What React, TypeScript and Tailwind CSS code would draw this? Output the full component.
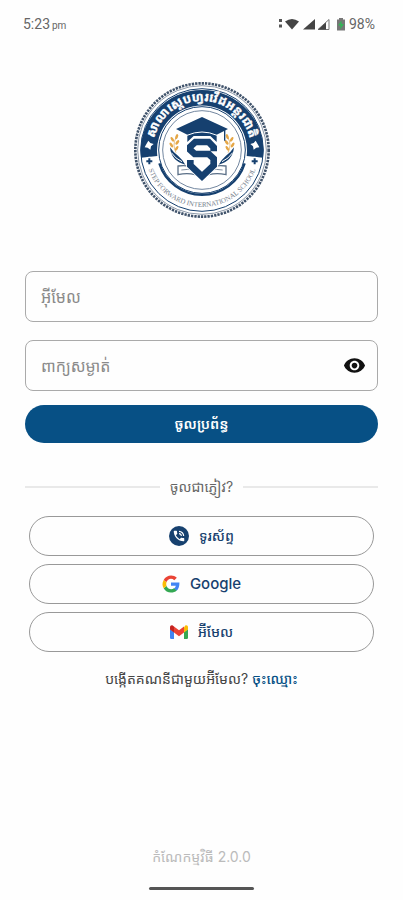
import { useState, type ReactNode } from "react";
import { MdPhoneInTalk, MdVisibility, MdVisibilityOff } from "react-icons/md";

const NAVY = "#16406f";
const EMAIL = "អ\u200c៊ីមែល";

function StatusBar() {
  return (
    <header className="flex h-12 items-center justify-between pr-7 pl-[23px] font-['Roboto',sans-serif] text-[#666]">
      <div className="flex items-baseline gap-0.5">
        <span className="text-sm">5:23</span>
        <span className="text-[10px]">pm</span>
      </div>
      <div className="flex items-center gap-1">
        <svg width="68" height="14" viewBox="0 0 68 14" aria-hidden="true">
          <path d="M2 2h3v3h-3zM2 7.500h3v3h-3z" fill="#555" />
          <path d="M8 4.500Q15-.5 22 4.500L15 12.500z" fill="#444" />
          <path d="M26 12.500 38 2v10.500z" fill="#444" />
          <path d="M41 12.500 52 2.500v10z" fill="none" stroke="#777" />
          <path d="M41 12.500 49 5.500v7z" fill="#444" />
          <path d="M62 1h4v1.500h2V13.500h-8V2.500h2z" fill="#777" />
          <path d="M64.500 3.500 61 8.500h2.500l-.5 4 4-5.500h-2.500z" fill="#35b558" />
        </svg>
        <span className="text-sm">98%</span>
      </div>
    </header>
  );
}

function Wheat() {
  return (
    <g>
      <path d="M-50 44Q-92 34-96-8Q-84 10-72 17Q-60 27-50 44z" fill={NAVY} />
      <path d="M-92 8Q-80 26-60 35" fill="none" stroke="#fff" strokeWidth="3" />
      <path d="M-78 8Q-90-15-78-37" fill="none" stroke="#dca34a" strokeWidth="2" />
      <g fill="#e5a747">
        <ellipse cx="-76" cy="-40" rx="4" ry="8" transform="rotate(22 -76 -40)" />
        <ellipse cx="-89" cy="-32" rx="4" ry="8" transform="rotate(-32 -89 -32)" />
        <ellipse cx="-74" cy="-23" rx="4" ry="8" transform="rotate(38 -74 -23)" />
        <ellipse cx="-92" cy="-15" rx="4" ry="8" transform="rotate(-35 -92 -15)" />
        <ellipse cx="-76" cy="-5" rx="4" ry="8" transform="rotate(32 -76 -5)" />
      </g>
    </g>
  );
}

function SchoolLogo() {
  return (
    <svg viewBox="-207 -207 414 414" className="size-[138px]" role="img" aria-label="Step Forward International School">
      <defs>
        <path id="top-arc" d="M-147 0A147 147 0 0 1 147 0" />
        <path id="bottom-arc" d="M-171 0A171 171 0 0 0 171 0" />
      </defs>
      <circle r="200" fill="#fff" stroke="#40536b" strokeWidth="8" strokeDasharray="7 3" />
      <circle r="193" fill="none" stroke="#52647b" strokeWidth="2" />
      <circle r="184" fill="#fff" stroke={NAVY} strokeWidth="3" />
      <path d="M-183 23A184 184 0 1 1 183 23L134 18A135 135 0 1 0-134 18z" fill={NAVY} />
      <circle r="130" fill="#fff" stroke={NAVY} strokeWidth="3" />
      <path d="M-128 40A134 134 0 0 0 128 40" fill="none" stroke={NAVY} strokeWidth="7" />
      <circle r="118" fill="none" stroke="#7387a0" strokeWidth="3" />
      <text
        fill="#fff"
        stroke="#fff"
        strokeWidth="1"
        fontSize="37"
        fontWeight="700"
        textAnchor="middle"
        fontFamily="'Noto Sans Khmer','Khmer OS','Noto Sans',sans-serif"
      >
        <textPath href="#top-arc" startOffset="50%">សាលាស្តេបហ្វរវើដអន្តរជាតិ</textPath>
      </text>
      <text fill="#77818e" fontSize="21" textAnchor="middle" fontFamily="'Liberation Serif',serif">
        <textPath href="#bottom-arc" startOffset="50%">STEP FORWARD INTERNATIONAL SCHOOL</textPath>
      </text>
      <g fill="#fff">
        <path d="M-161-28l6 7 10 3-8 7-2 10-8-6-9-1 4-8z" />
        <path d="M161-28l-6 7-10 3 8 7 2 10 8-6 9-1-4-8z" />
      </g>
      {[-158, 158].map((x) => (
        <g key={x} fill={NAVY}>
          <circle cx={x} cy="34" r="14" fill="#fff" />
          <path d={`M${x - 3} 25h6v6h6v6h-6v6h-6v-6h-6v-6h6z`} />
        </g>
      ))}
      <Wheat />
      <g transform="scale(-1 1)">
        <Wheat />
      </g>
      <path d="M-72 48Q-30 42 0 66Q30 42 72 48V74Q28 65 0 84Q-28 65-72 74z" fill="#fff" stroke="#5b7088" strokeWidth="4" />
      <path d="M-62 60Q-24 53 0 74Q24 53 62 60" fill="none" stroke="#8191a4" strokeWidth="3" />
      <path d="M-44-60H44V-24L25-42H-25L-44-24z" fill={NAVY} />
      <path d="M-78-63 0-99 78-63 44-46Q0-66-44-46z" fill={NAVY} />
      <path d="M-45-44Q0-64 45-44" fill="none" stroke="#fff" strokeWidth="3" />
      <path d="M66-60h4v32h-4z" fill={NAVY} />
      <path d="M-46 20V50L0 94L46 50V18z" fill="#fff" />
      <path d="M35 4V-8L20-24H-20L-35-10V0L-22 12H20L35 26V46L0 79-35 46V30" fill="none" stroke="#fff" strokeWidth="25" />
      <path d="M35 4V-8L20-24H-20L-35-10V0L-22 12H20L35 26V46L0 79-35 46V30" fill="none" stroke={NAVY} strokeWidth="20" />
    </svg>
  );
}

function GoogleIcon() {
  return (
    <svg width="18" height="18" viewBox="3 3 42 42" aria-hidden="true">
      <path fill="#4285f4" d="M43.600 20.500H24v7.800h11.200c-.6 3-2.300 5-4.500 6.500l6.500 5.200c4.600-4.300 6.800-11 6.400-19.500z" />
      <path fill="#34a853" d="M24 44c5.400 0 10-1.800 13.300-4.900l-6.500-5.100c-4.800 3.500-13.800 2.800-17.200-5.500l-6.700 5.200C10.200 40 16.600 44 24 44z" />
      <path fill="#fbbc05" d="M13.600 28.500c-1.100-3.200-1-6 0-8.900L6.900 14.400c-3.800 7.200-3.600 13.300 0 19.300z" />
      <path fill="#ea4335" d="M13.600 19.600C16 12.500 24.800 9.200 31.700 15l5.900-5.800C28 .500 12.600 3.400 6.900 14.400z" />
    </svg>
  );
}

function GmailIcon() {
  return (
    <svg width="18" height="14" viewBox="0 0 18 14" aria-hidden="true">
      <path fill="#4285f4" d="M0 4l4 3v7H1.200Q0 14 0 12.800z" />
      <path fill="#34a853" d="M18 4l-4 3v7h2.800Q18 14 18 12.800z" />
      <path fill="#fbbc04" d="M14 2.500 15.100.7C16.400-.3 18 .5 18 2.200V4.500l-4 3z" />
      <path fill="#c5221f" d="M0 4.500V2.200C0 .500 1.700-.3 3 .700L4 1.500v6z" />
      <path fill="#ea4335" d="M4 1.500 9 5.300l5-3.800v6L9 11.300 4 7.500z" />
    </svg>
  );
}

function ProviderButton({ icon, children }: { icon: ReactNode; children: ReactNode }) {
  return (
    <button
      type="button"
      className="flex h-10 w-full items-center justify-center gap-2.5 rounded-full border border-[#999] text-sm font-medium text-[#17416f]"
    >
      {icon}
      {children}
    </button>
  );
}

const FIELD =
  "h-[51px] w-full rounded-lg border border-[#aaa] bg-transparent px-[15px] text-base text-gray-800 outline-none placeholder:text-[#8a8a8a] focus:border-[#075085]";

export default function App() {
  const [visible, setVisible] = useState(false);

  return (
    <div className="flex min-h-screen flex-col bg-[#fefefe] font-['Inter','Noto_Sans_Khmer','Khmer_OS','Noto_Sans',sans-serif]">
      <StatusBar />
      <main className="flex flex-1 flex-col px-[25px] pt-[33px]">
        <div className="flex justify-center">
          <SchoolLogo />
        </div>

        <form className="mt-[52px] flex flex-col" onSubmit={(e) => e.preventDefault()}>
          <input type="email" aria-label="អ៊ីមែល" placeholder="អ៊ីមែល" className={FIELD} />
          <div className="relative mt-[18px]">
            <input
              type={visible ? "text" : "password"}
              aria-label="ពាក្យសម្ងាត់"
              placeholder="ពាក្យសម្ងាត់"
              className={FIELD}
            />
            <button
              type="button"
              aria-label="បង្ហាញពាក្យសម្ងាត់"
              onClick={() => setVisible(!visible)}
              className="absolute inset-y-0 right-3 flex items-center text-[#111]"
            >
              {visible ? <MdVisibilityOff size={23} /> : <MdVisibility size={23} />}
            </button>
          </div>
          <button type="submit" className="mt-3.5 h-[38px] rounded-full bg-[#075085] text-sm font-semibold text-white">
            ចូលប្រព័ន្ធ
          </button>
        </form>

        <div className="mt-8 flex h-6 items-center gap-2.5 text-sm text-[#666]">
          <span className="h-0.5 flex-1 bg-[#e9e9e9]" />
          <span>ចូលជាភ្ញៀវ?</span>
          <span className="h-0.5 flex-1 bg-[#e9e9e9]" />
        </div>

        <div className="mt-[17px] flex flex-col gap-2 px-1">
          <ProviderButton
            icon={
              <span className="flex size-5 items-center justify-center rounded-full bg-[#17416f] text-white">
                <MdPhoneInTalk size={14} />
              </span>
            }
          >
            <span>ទូរស័ព្ទ</span>
          </ProviderButton>
          <ProviderButton icon={<GoogleIcon />}>
            <span className="text-[15px]">Google</span>
          </ProviderButton>
          <ProviderButton icon={<GmailIcon />}>
            <span>{EMAIL}</span>
          </ProviderButton>
        </div>

        <p className="mt-[15px] flex h-6 items-center justify-center gap-1 text-sm whitespace-nowrap text-[#444]">
          <span>{`បង្កើតគណនីជាមួយ${EMAIL}?`}</span>
          <a href="#register" className="font-medium text-[#075085]">ចុះឈ្មោះ</a>
        </p>
      </main>
      <footer className="flex flex-col items-center pb-2.5">
        <p className="h-6 text-sm leading-6 text-[#bbb]">កំណែកម្មវិធី 2.0.0</p>
        <span className="mt-[18px] h-[3px] w-[105px] rounded-full bg-[#555]" />
      </footer>
    </div>
  );
}
